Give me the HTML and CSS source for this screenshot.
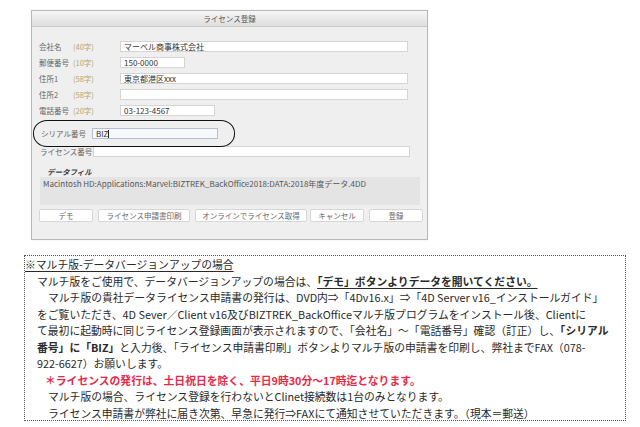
FILE: index.html
```html
<!DOCTYPE html>
<html lang="ja">
<head>
<meta charset="utf-8">
<link rel="stylesheet" href="styles.css">
</head>
<body>
<div class="dialog">
  <div class="titlebar">ライセンス登録</div>
  <div class="form">
    <div class="row">
      <span class="lbl">会社名</span><span class="cnt">(40字)</span>
      <span class="field w-long">マーベル商事株式会社</span>
    </div>
    <div class="row">
      <span class="lbl">郵便番号</span><span class="cnt">(10字)</span>
      <span class="field w-zip">150-0000</span>
    </div>
    <div class="row">
      <span class="lbl">住所1</span><span class="cnt">(58字)</span>
      <span class="field w-long">東京都港区xxx</span>
    </div>
    <div class="row">
      <span class="lbl">住所2</span><span class="cnt">(58字)</span>
      <span class="field w-long"></span>
    </div>
    <div class="row">
      <span class="lbl">電話番号</span><span class="cnt">(20字)</span>
      <span class="field w-tel">03-123-4567</span>
    </div>
    <div class="row serial-row">
      <span class="lbl2">シリアル番号</span>
      <span class="field serial">BIZ<span class="caret"></span></span>
      <span class="ring"></span>
    </div>
    <div class="row license-row">
      <span class="lbl3">ライセンス番号</span>
      <span class="field w-lic"></span>
    </div>
    <div class="datafile-lbl">データフィル</div>
    <div class="pathbox">Macintosh HD:Applications:Marvel:BIZTREK_BackOffice2018:DATA:2018年度データ.4DD</div>
    <div class="buttons">
      <span class="btn b-demo">デモ</span>
      <span class="btn b-print">ライセンス申請書印刷</span>
      <span class="btn b-online">オンラインでライセンス取得</span>
      <span class="btn b-cancel">キャンセル</span>
      <span class="btn b-reg">登録</span>
    </div>
  </div>
</div>

<div class="note">
  <div class="ln head"><u>※マルチ版-データバージョンアップの場合</u></div>
  <div class="ln">マルチ版をご使用で、データバージョンアップの場合は、<b><u>「デモ」ボタンよりデータを開いてください。</u></b></div>
  <div class="ln ind">マルチ版の貴社データライセンス申請書の発行は、DVD内⇒「4Dv16.x」⇒「4D Server v16_インストールガイド」</div>
  <div class="ln">をご覧いただき、4D Sever／Client v16及びBIZTREK_BackOfficeマルチ版プログラムをインストール後、Clientに</div>
  <div class="ln">て最初に起動時に同じライセンス登録画面が表示されますので、「会社名」～「電話番号」確認（訂正）し、<b>「シリアル</b></div>
  <div class="ln"><b>番号」に「BIZ」</b>と入力後、「ライセンス申請書印刷」ボタンよりマルチ版の申請書を印刷し、弊社までFAX（078-</div>
  <div class="ln">922-6627）お願いします。</div>
  <div class="ln red">＊ライセンスの発行は、土日祝日を除く、平日9時30分～17時迄となります。</div>
  <div class="ln ind">マルチ版の場合、ライセンス登録を行わないとClinet接続数は1台のみとなります。</div>
  <div class="ln ind">ライセンス申請書が弊社に届き次第、早急に発行⇒FAXにて通知させていただきます。（現本＝郵送）</div>
</div>
</body>
</html>
```

FILE: styles.css
```css
* { box-sizing: border-box; }
html, body { margin: 0; padding: 0; background: #ffffff; }
body {
  font-family: "Noto Sans CJK JP", "Noto Sans", sans-serif;
  color: #333;
  width: 640px;
  height: 427px;
  overflow: hidden;
  padding-top: 10px;
}

.dialog {
  margin-left: 31px;
  width: 397px;
  height: 230px;
  border: 1px solid #b9b9b9;
  background: #efefef;
  box-shadow: 0 0 1px rgba(0,0,0,0.15);
}
.titlebar {
  height: 16px;
  line-height: 15px;
  text-align: center;
  font-size: 7.5px;
  color: #555;
  background: linear-gradient(#f6f6f6, #dedede);
  border-bottom: 1px solid #c9c9c9;
}
.form {
  position: relative;
  padding: 11px 0 0 7px;
}
.row {
  display: flex;
  align-items: center;
  height: 16px;
  font-size: 7.5px;
  color: #666;
}
.lbl { width: 34px; white-space: nowrap; }
.cnt { width: 47px; color: #b9a66a; white-space: nowrap; }
.field {
  display: block;
  height: 11px;
  line-height: 10px;
  background: #fff;
  border: 1px solid #d4d4d4;
  font-size: 8px;
  color: #333;
  padding-left: 3px;
  white-space: nowrap;
}
.w-long { width: 288px; }
.w-zip { width: 65px; }
.w-tel { width: 95px; }

.serial-row { margin-top: 7px; position: relative; }
.lbl2 { width: 51px; margin-left: 2px; white-space: nowrap; }
.serial {
  width: 126px;
  background: #f7f8fc;
  border-color: #b4bfd4;
}
.caret {
  display: inline-block;
  width: 1px;
  height: 8px;
  background: #222;
  vertical-align: -1px;
}
.ring {
  position: absolute;
  left: -6px;
  top: -5px;
  width: 202px;
  height: 27px;
  border: 1.5px solid #111;
  border-radius: 14px / 13px;
}
.license-row { margin-top: 2px; }
.lbl3 { width: 53px; margin-left: 1px; white-space: nowrap; }
.w-lic { width: 317px; }

.datafile-lbl {
  margin: 8px 0 0 8px;
  font-size: 7.5px;
  font-weight: bold;
  font-style: italic;
  color: #444;
  height: 10px;
  line-height: 10px;
}
.pathbox {
  margin: 0 0 0 1px;
  width: 380px;
  height: 28px;
  background: #e4e4e4;
  font-size: 8px;
  color: #555;
  padding: 2px 0 0 3px;
  white-space: nowrap;
  line-height: 10px;
}
.buttons {
  display: flex;
  margin-top: 4px;
  height: 13px;
}
.btn {
  display: flex;
  align-items: center;
  justify-content: center;
  height: 13px;
  background: #fff;
  border: 1px solid #d6d6d6;
  border-radius: 2px;
  font-size: 7.5px;
  color: #666;
  white-space: nowrap;
}
.b-demo { width: 54px; margin-left: 0; }
.b-print { width: 92px; margin-left: 5px; }
.b-online { width: 112px; margin-left: 5px; }
.b-cancel { width: 54px; margin-left: 3px; }
.b-reg { width: 54px; margin-left: 5px; }

.note {
  margin: 15px 0 0 24px;
  width: 602px;
  height: 166px;
  border: 1px dotted #555;
  padding: 0 0 0 12px;
  font-size: 10.8px;
  line-height: 16.5px;
  color: #2a2a2a;
}
.ln { white-space: nowrap; height: 16.5px; }
.head { margin-left: -12px; }
.ind { text-indent: 11px; }
.red { color: #e8294a; font-weight: bold; text-indent: 8px; }
u { text-underline-offset: 2px; }
```
